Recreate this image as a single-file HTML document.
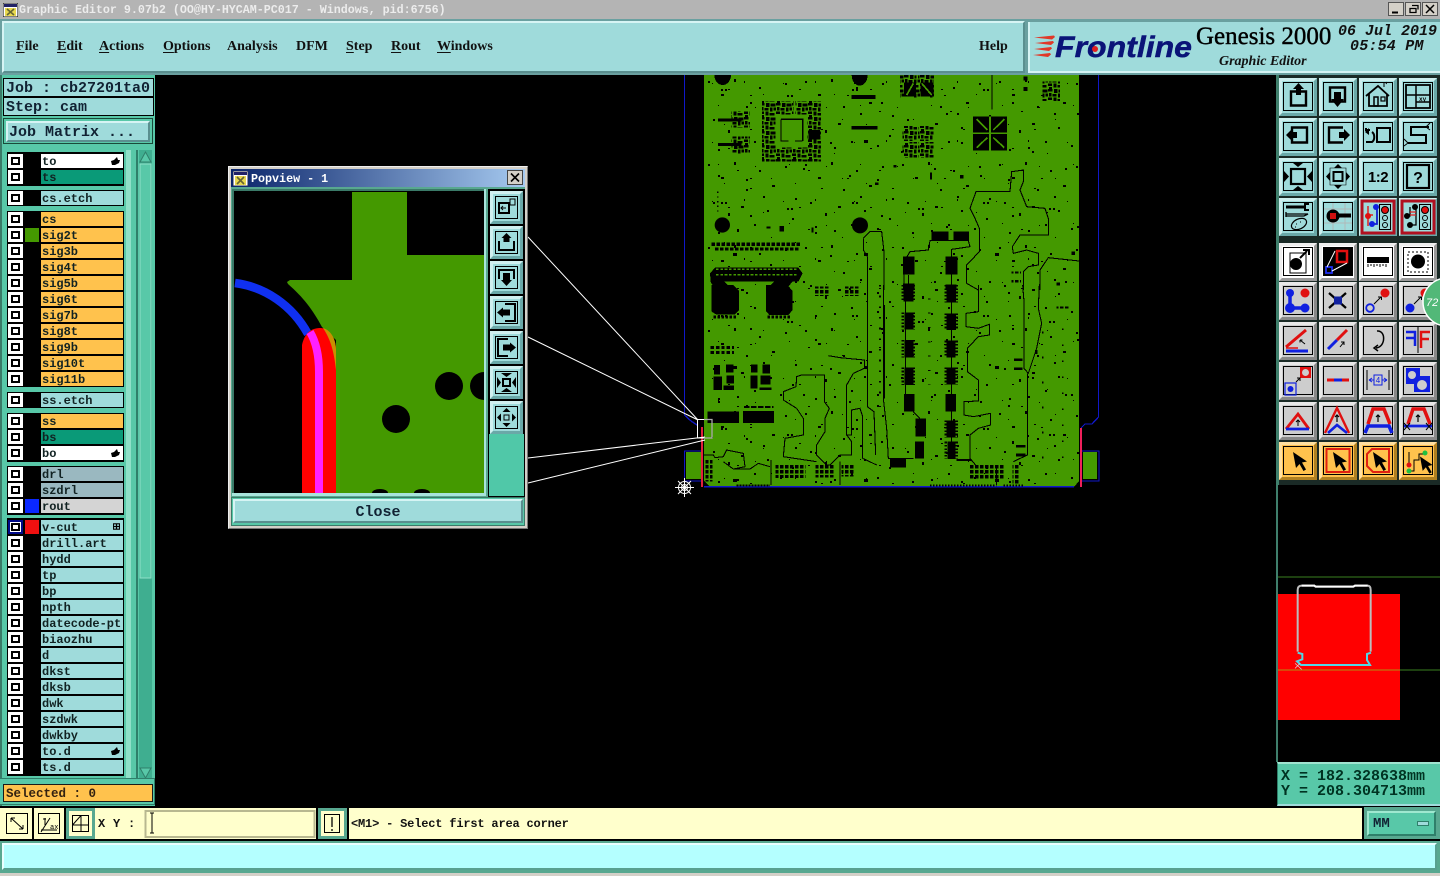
<!DOCTYPE html>
<html><head><meta charset="utf-8"><title>Graphic Editor</title>
<style>
html,body{margin:0;padding:0;background:#000;width:1440px;height:876px;overflow:hidden}
body{position:relative;font-family:"Liberation Mono",monospace;color:#111}
.a{position:absolute;box-sizing:border-box;white-space:pre}
.m{position:absolute;top:39px;font:bold 14px/16px "Liberation Serif",serif;color:#111}
.m u{text-underline-offset:2px}
.g{position:absolute;left:7px;width:117px;background:#000}
.r{position:absolute;left:8px;height:14px;width:115px}
.c{position:absolute;left:0;top:0;width:15px;height:14px;background:#fff}
.c:after{content:"";position:absolute;left:3px;top:3px;width:5px;height:4px;border:2px solid #000;background:#fff}
.s{position:absolute;left:17px;top:0;width:14px;height:14px}
.n{position:absolute;left:33px;top:0;width:81px;height:14px;background:#9fdbdb;font:bold 12px/16px "Liberation Mono",monospace;padding-left:1px;overflow:hidden;color:#122;letter-spacing:0}
.o{background:#ffc24d}.w{background:#fff}.t{background:#0a9a78}.gy{background:#9ab8c0}.l{background:#d4d4d4}
.h{position:absolute;right:3px;top:3px;width:9px;height:8px}
</style></head><body>

<!-- title bar -->
<div class="a" style="left:0;top:0;width:1440px;height:19px;background:#b4b4b4"></div>
<svg class="a" style="left:3px;top:3px" width="15" height="14"><rect width="15" height="14" fill="#fff" stroke="#000"/><rect x="1" y="1" width="13" height="3" fill="#226"/><rect x="2" y="5" width="11" height="8" fill="#e8d850"/><path d="M4 6l7 6M11 6l-7 6" stroke="#663" stroke-width="1.6"/></svg>
<div class="a" style="left:19px;top:3px;font:bold 11.7px/14px 'Liberation Mono',monospace;color:#ececec;letter-spacing:-.02px">Graphic Editor 9.07b2 (OO@HY-HYCAM-PC017 - Windows, pid:6756)</div>
<svg class="a" style="left:1388px;top:2px" width="50" height="14">
<g fill="#d4d0c8" stroke="#555"><rect x=".5" y=".5" width="15" height="13"/><rect x="17.5" y=".5" width="15" height="13"/><rect x="34.5" y=".5" width="15" height="13"/></g>
<path d="M4 10.5h6" stroke="#000" stroke-width="2"/><path d="M22 6.5h6v4h-6zM24 3.500h6v4" fill="none" stroke="#000" stroke-width="1.300"/><path d="M38 3l8 8M46 3l-8 8" stroke="#000" stroke-width="1.500"/></svg>

<!-- menu -->
<div class="a" style="left:0;top:19px;width:1440px;height:56px;background:#6aa0a0"></div>
<div class="a" style="left:2px;top:21px;width:1023px;height:52px;background:#9fdbdb;border-left:2px solid #d6f4f4;border-top:2px solid #d6f4f4;border-bottom:2px solid #5a8f8f;border-right:2px solid #5a8f8f"></div>
<div class="a" style="left:1028px;top:22px;width:412px;height:51px;background:#9fdbdb;border-left:2px solid #d6f4f4;border-bottom:2px solid #d6f4f4"></div>
<div class="m" style="left:16px"><u>F</u>ile</div>
<div class="m" style="left:57px"><u>E</u>dit</div>
<div class="m" style="left:99px"><u>A</u>ctions</div>
<div class="m" style="left:163px"><u>O</u>ptions</div>
<div class="m" style="left:227px">Analysis</div>
<div class="m" style="left:296px">DFM</div>
<div class="m" style="left:346px"><u>S</u>tep</div>
<div class="m" style="left:391px"><u>R</u>out</div>
<div class="m" style="left:437px"><u>W</u>indows</div>
<div class="m" style="left:979px">Help</div>

<!-- logo -->
<svg class="a" style="left:1030px;top:30px" width="170" height="32">
<path d="M4 7.500L24 5.500 25 7 22 9.500ZM5 13L23 11 24 12.500 21 15ZM4 19L21 17 22 18.500 19 21ZM3 25L20 23 21 24.500 18 27Z" fill="#e03828"/>
<text x="25" y="27" font-family="Liberation Sans" font-weight="bold" font-style="italic" font-size="30" fill="#0a1478" stroke="#0a1478" stroke-width=".5" textLength="137" lengthAdjust="spacingAndGlyphs">Frontline</text>
<circle cx="65" cy="19" r="3" fill="#e02020"/></svg>
<div class="a" style="left:1196px;top:22px;font:25px/30px 'Liberation Serif',serif;color:#000;-webkit-text-stroke:.4px #000">Genesis 2000</div>
<div class="a" style="left:1219px;top:54px;font:italic bold 14px/16px 'Liberation Serif',serif;color:#111">Graphic Editor</div>
<div class="a" style="left:1338px;top:24px;font:italic bold 15px/16px 'Liberation Mono',monospace;color:#111">06 Jul 2019</div>
<div class="a" style="left:1350px;top:39px;font:italic bold 15px/16px 'Liberation Mono',monospace;color:#111;letter-spacing:.2px">05:54 PM</div>

<!-- left panel -->
<div class="a" style="left:0;top:75px;width:155px;height:733px;background:#58c8a8;border-left:2px solid #3a7a68"></div>
<div class="a" style="left:3px;top:78px;width:151px;height:19px;background:#9fdbdb;border:1px solid #000;font:bold 15px/19px 'Liberation Mono',monospace;padding-left:2px;color:#123">Job : cb27201ta0</div>
<div class="a" style="left:3px;top:97px;width:151px;height:19px;background:#9fdbdb;border:1px solid #000;font:bold 15px/19px 'Liberation Mono',monospace;padding-left:2px;color:#123">Step: cam</div>
<div class="a" style="left:3px;top:118px;width:150px;height:26px;background:#58c8a8;border:1px solid #1a4a3a"></div>
<div class="a" style="left:6px;top:121px;width:144px;height:21px;background:#9fdbdb;border-top:2px solid #d6f4f4;border-left:2px solid #d6f4f4;border-right:2px solid #5a8f8f;border-bottom:2px solid #5a8f8f;font:bold 15px/19px 'Liberation Mono',monospace;padding-left:1px;color:#123">Job Matrix ...</div>

<div class="g" style="top:152px;height:34px"></div>
<div class="g" style="top:190px;height:16px"></div>
<div class="g" style="top:211px;height:176px"></div>
<div class="g" style="top:392px;height:16px"></div>
<div class="g" style="top:413px;height:49px"></div>
<div class="g" style="top:466px;height:49px"></div>
<div class="g" style="top:518px;height:258px"></div>

<div class="r" style="top:154px"><i class="c"></i><b class="n w">to<svg class="h" viewBox="0 0 9 8"><path d="M0 4l3-1 3-3 1 3 2 0-1 3-4 2H1z"/></svg></b></div>
<div class="r" style="top:170px"><i class="c"></i><b class="n t">ts</b></div>
<div class="r" style="top:191px"><i class="c"></i><b class="n">cs.etch</b></div>
<div class="r" style="top:212px"><i class="c"></i><b class="n o">cs</b></div>
<div class="r" style="top:228px"><i class="c"></i><i class="s" style="background:#449900"></i><b class="n o">sig2t</b></div>
<div class="r" style="top:244px"><i class="c"></i><b class="n o">sig3b</b></div>
<div class="r" style="top:260px"><i class="c"></i><b class="n o">sig4t</b></div>
<div class="r" style="top:276px"><i class="c"></i><b class="n o">sig5b</b></div>
<div class="r" style="top:292px"><i class="c"></i><b class="n o">sig6t</b></div>
<div class="r" style="top:308px"><i class="c"></i><b class="n o">sig7b</b></div>
<div class="r" style="top:324px"><i class="c"></i><b class="n o">sig8t</b></div>
<div class="r" style="top:340px"><i class="c"></i><b class="n o">sig9b</b></div>
<div class="r" style="top:356px"><i class="c"></i><b class="n o">sig10t</b></div>
<div class="r" style="top:372px"><i class="c"></i><b class="n o">sig11b</b></div>
<div class="r" style="top:393px"><i class="c"></i><b class="n">ss.etch</b></div>
<div class="r" style="top:414px"><i class="c"></i><b class="n o">ss</b></div>
<div class="r" style="top:430px"><i class="c"></i><b class="n t">bs</b></div>
<div class="r" style="top:446px"><i class="c"></i><b class="n w">bo<svg class="h" viewBox="0 0 9 8"><path d="M0 4l3-1 3-3 1 3 2 0-1 3-4 2H1z"/></svg></b></div>
<div class="r" style="top:467px"><i class="c"></i><b class="n gy">drl</b></div>
<div class="r" style="top:483px"><i class="c"></i><b class="n gy">szdrl</b></div>
<div class="r" style="top:499px"><i class="c"></i><i class="s" style="background:#0a28ff"></i><b class="n l">rout</b></div>
<div class="r" style="top:520px"><i class="c" style="outline:2px solid #000a8a;outline-offset:-2px"></i><i class="s" style="background:#f01010"></i><b class="n">v-cut<svg class="h" style="width:7px;height:7px" viewBox="0 0 9 8"><path d="M.5.5h8v7h-8zM4.500.5v7M.5 4h8" fill="none" stroke="#000" stroke-width="1.500"/></svg></b></div>
<div class="r" style="top:536px"><i class="c"></i><b class="n">drill.art</b></div>
<div class="r" style="top:552px"><i class="c"></i><b class="n">hydd</b></div>
<div class="r" style="top:568px"><i class="c"></i><b class="n">tp</b></div>
<div class="r" style="top:584px"><i class="c"></i><b class="n">bp</b></div>
<div class="r" style="top:600px"><i class="c"></i><b class="n">npth</b></div>
<div class="r" style="top:616px"><i class="c"></i><b class="n">datecode-pt</b></div>
<div class="r" style="top:632px"><i class="c"></i><b class="n">biaozhu</b></div>
<div class="r" style="top:648px"><i class="c"></i><b class="n">d</b></div>
<div class="r" style="top:664px"><i class="c"></i><b class="n">dkst</b></div>
<div class="r" style="top:680px"><i class="c"></i><b class="n">dksb</b></div>
<div class="r" style="top:696px"><i class="c"></i><b class="n">dwk</b></div>
<div class="r" style="top:712px"><i class="c"></i><b class="n">szdwk</b></div>
<div class="r" style="top:728px"><i class="c"></i><b class="n">dwkby</b></div>
<div class="r" style="top:744px"><i class="c"></i><b class="n">to.d<svg class="h" viewBox="0 0 9 8"><path d="M0 4l3-1 3-3 1 3 2 0-1 3-4 2H1z"/></svg></b></div>
<div class="r" style="top:760px"><i class="c"></i><b class="n">ts.d</b></div>

<!-- scrollbars -->
<svg class="a" style="left:124px;top:150px" width="31" height="632">
<rect x="2" width="5" height="632" fill="#8fe0c8"/><rect x="7" width="5" height="632" fill="#58c8a8"/><rect x="12" width="2" height="632" fill="#2f7f6a"/>
<rect x="15" width="13" height="630" fill="#3fae90"/>
<rect x="16" y="14" width="11" height="414" fill="#58c8a8" stroke="#8fe0c8"/>
<path d="M16 12L21.500 2 27 12z" fill="#58c8a8" stroke="#2f7f6a"/>
<path d="M16 618L21.500 628 27 618z" fill="#58c8a8" stroke="#2f7f6a"/>
</svg>
<div class="a" style="left:0;top:778px;width:155px;height:27px;background:#58c8a8;border:1px solid #2f7f6a;border-width:1px 1px 1px 0"></div>
<div class="a" style="left:3px;top:784px;width:150px;height:18px;background:#ffc24d;border:1px solid #1a1a1a;font:bold 12.500px/18px 'Liberation Mono',monospace;padding-left:2px;color:#321">Selected : 0</div>

<!-- PCB canvas -->
<svg class="a" style="left:155px;top:75px" width="1121" height="733" viewBox="155 75 1121 733" shape-rendering="crispEdges">
<defs>
<pattern id="sp" width="97" height="83" patternUnits="userSpaceOnUse" x="704" y="75"><path d="M4 6h2v2H4zM17 19h3v2h-3zM30 4h2v3h-2zM42 31h2v2h-2zM55 12h2v2h-2zM68 27h3v2h-3zM81 8h2v2h-2zM91 40h2v2h-2zM9 44h2v2H9zM24 55h2v3h-2zM37 48h3v2h-3zM50 66h2v2h-2zM63 52h2v2h-2zM76 70h2v2h-2zM88 60h2v2h-2zM14 74h2v2h-2zM33 72h2v2h-2zM59 38h2v2h-2zM46 20h2v1h-2z"/></pattern>
<pattern id="sp2" width="131" height="113" patternUnits="userSpaceOnUse" x="710" y="80"><path d="M11 9h2v2h-2zM15 9h2v2h-2zM40 22h2v2h-2zM77 15h2v2h-2zM81 15h2v2h-2zM105 33h2v2h-2zM23 60h4v3h-4zM60 71h2v2h-2zM93 88h2v2h-2zM120 62h2v2h-2zM36 99h2v2h-2zM8 95h2v2H8z"/></pattern>
<pattern id="sp3" width="71" height="59" patternUnits="userSpaceOnUse" x="706" y="78"><path d="M6 5h1v1H6zM22 11h2v1h-2zM38 3h1v2h-1zM57 16h1v1h-1zM12 27h1v1h-1zM31 33h2v1h-2zM49 29h1v1h-1zM65 41h1v1h-1zM18 46h1v1h-1zM44 51h2v1h-2z"/></pattern>
<pattern id="dn" width="48" height="42" patternUnits="userSpaceOnUse"><rect width="48" height="42" fill="#449900"/><path d="M0 0h14v8H0zM18 0h10v12H18zM32 2h14v8H32zM3 12h8v10H3zM14 15h12v7H14zM30 14h8v12H30zM41 13h7v9h-7zM0 26h12v7H0zM16 26h9v12H16zM29 30h15v8H29zM3 36h9v6H3z"/></pattern>
<pattern id="gd" width="15" height="15" patternUnits="userSpaceOnUse"><rect width="10" height="10"/></pattern>
</defs>

<!-- blue outline -->
<path d="M684.500 75V415L691 421 697 425M1098.500 75V417L1092 424H1085L1081 428" fill="none" stroke="#1018c8" stroke-width="1.300"/>
<rect x="684.500" y="451" width="18" height="30" fill="none" stroke="#1018c8" stroke-width="1.300"/>
<rect x="1081" y="451" width="18" height="30" fill="none" stroke="#1018c8" stroke-width="1.300"/>
<rect x="686" y="452" width="15" height="27" fill="#449900"/>
<rect x="1083" y="452" width="14" height="27" fill="#449900"/>

<!-- board -->
<path d="M704 75H1079V481L1074 487H710L704 481Z" fill="#449900"/>
<rect x="704" y="75" width="375" height="412" fill="url(#sp)"/>
<rect x="704" y="75" width="375" height="412" fill="url(#sp2)"/>
<rect x="704" y="75" width="375" height="412" fill="url(#sp3)"/>
<path d="M704 486.500H710L1074 486.500" stroke="#1018c8" stroke-width="1.500" fill="none"/>

<!-- top zoomed group -->
<g transform="translate(680,75) scale(.33333)">
<path d="M103 0h50a25 30 0 0 1-50 0zM515 0h48a24 32 0 0 1-48 0z"/>
<rect x="660" y="0" width="102" height="68" fill="url(#dn)"/>
<rect x="672" y="22" width="36" height="42"/><rect x="722" y="22" width="38" height="42"/>
<path d="M680 60L700 25M725 25L755 60M712 0V14" stroke="#449900" stroke-width="5"/>
<rect x="934" y="0" width="4" height="103"/>
<rect x="1087" y="20" width="53" height="58" fill="url(#dn)"/>
<rect x="1030" y="5" width="12" height="12"/><rect x="1030" y="36" width="12" height="12"/>
<!-- QFP -->
<rect x="246" y="78" width="177" height="181" fill="url(#dn)"/>
<rect x="286" y="118" width="96" height="100" fill="#449900"/>
<path d="M303 133H368V198M303 133V198H325M345 198H368" fill="none" stroke="#000" stroke-width="4"/>
<rect x="386" y="165" width="34" height="28"/>
<rect x="340" y="78" width="6" height="40" fill="#449900"/>
<!-- left rows -->
<rect x="155" y="108" width="55" height="50" fill="url(#dn)"/><rect x="114" y="130" width="70" height="9"/>
<rect x="155" y="185" width="55" height="50" fill="url(#dn)"/><rect x="114" y="204" width="70" height="9"/>
<rect x="515" y="153" width="78" height="10"/><rect x="515" y="60" width="72" height="12"/>
<rect x="667" y="153" width="93" height="95" fill="url(#dn)"/><path d="M712 153v95M667 200h93" stroke="#449900" stroke-width="3"/>
<!-- X blocks -->
<rect x="879" y="124" width="102" height="102"/>
<path d="M930 124V226M879 175H981M890 132L922 165M973 132L940 165M890 218L922 188M973 218L940 188" stroke="#449900" stroke-width="5"/>
<circle cx="127" cy="450" r="23" shape-rendering="auto"/><circle cx="540" cy="451" r="24" shape-rendering="auto"/>
<!-- connector -->
<path d="M95 508H360M105 522H355" stroke="#000" stroke-width="10" stroke-dasharray="10 5"/>
<path d="M90 595L105 578H355L368 595L355 620H338L315 645H258L282 620H133L160 645H105L92 620Z"/>
<path d="M108 583H352M108 599H355" stroke="#449900" stroke-width="5" stroke-dasharray="8 5"/>
<rect x="755" y="470" width="50" height="27"/><rect x="820" y="470" width="47" height="27"/>
<rect x="669" y="545" width="35" height="54"/>
<rect x="797" y="545" width="35" height="54"/>
<rect x="669" y="625" width="35" height="20"/><rect x="797" y="628" width="32" height="17"/>
<g fill="none" stroke="#000" stroke-width="3.200">
<path d="M550 490L570 470H605L612 530V645M550 490V525L562 545V645"/>
<path d="M672 645V560L690 530L745 525L750 497H865L870 515L815 523V645"/>
<path d="M895 645L860 625V570L898 530V460L885 430L870 400L888 350H990L995 290L1030 285V320L1020 345L1040 395L1095 400L1105 430V480H1020L997 515L1000 535L1040 525L1075 535V570L1045 575L1030 590V645"/>
<path d="M1080 645V585L1105 548L1197 558"/>
<path d="M685 600V625M815 600V628"/>
</g>
<g><rect x="260" y="455" width="12" height="5"/><rect x="298" y="453" width="14" height="16"/><rect x="395" y="458" width="6" height="14"/><rect x="585" y="322" width="10" height="8"/><rect x="640" y="270" width="10" height="8"/><rect x="995" y="590" width="28" height="8" fill="url(#gd)"/><rect x="995" y="615" width="28" height="8" fill="url(#gd)"/><rect x="750" y="293" width="6" height="20"/><rect x="835" y="298" width="20" height="16" fill="url(#gd)"/><rect x="1130" y="622" width="10" height="10"/><rect x="1175" y="530" width="10" height="10"/><rect x="400" y="637" width="40" height="8" fill="url(#gd)"/><rect x="498" y="637" width="40" height="8" fill="url(#gd)"/></g>
<path d="M113 350V415" stroke="#000" stroke-width="4" stroke-dasharray="4 10"/>
</g>

<!-- bottom zoomed group -->
<g transform="translate(670,285) scale(.33333)">
<path d="M125 0H190L207 18V75L195 88H138L125 80Z"/>
<path d="M288 0H352L368 18V75L355 90H298L288 78Z"/>
<path d="M130 96H200M292 96H362" stroke="#000" stroke-width="10" stroke-dasharray="8 4"/>
<path d="M122 188H192M122 202H192" stroke="#000" stroke-width="9" stroke-dasharray="10 6"/>
<g><path d="M700 0H730V50H700ZM703 82H730V134H703ZM703 165H730V218H703ZM703 247H730V300H703ZM702 327H733V380H702Z"/>
<path d="M830 0H858V52H830ZM830 85H858V135H830ZM830 167H857V218H830ZM830 247H857V298H830ZM827 327H858V380H827ZM830 406H857V458H830ZM832 470H857V522H832Z"/>
<path d="M737 400H768V455H737ZM735 470H762V520H735ZM660 520H708V548H660Z"/>
<rect x="113" y="380" width="94" height="34"/><rect x="219" y="378" width="93" height="36"/>
<path d="M132 240H150V268H132ZM168 238H190V262H168ZM130 275H156V315H130ZM170 272H192V296H170ZM160 302H192V315H160Z"/>
<path d="M243 238H262V262H243ZM278 238H300V265H278ZM242 272H262V310H242ZM272 272H302V298H272ZM268 308H305V315H268Z"/>
</g>
<!-- pad teeth -->
<path d="M698 0V50M698 82V134M698 165V218M698 247V300M732 0V50M732 82V134M732 165V218M732 247V300M827 0V52M827 85V135M827 167V218M827 247V298M827 406V458M827 470V522M860 0V52M860 85V135M860 167V218M860 247V298M860 406V458M860 470V522" stroke="#000" stroke-width="7" stroke-dasharray="5 5" fill="none"/>
<path d="M222 366H310" stroke="#000" stroke-width="5" stroke-dasharray="16 5"/>
<rect x="430" y="5" width="45" height="28" fill="url(#gd)"/><rect x="525" y="5" width="45" height="28" fill="url(#gd)"/>
<rect x="316" y="537" width="90" height="42" fill="url(#gd)"/><rect x="436" y="537" width="55" height="40" fill="url(#gd)"/><rect x="515" y="537" width="36" height="38" fill="url(#gd)"/><rect x="895" y="537" width="105" height="45" fill="url(#gd)"/><rect x="1028" y="537" width="20" height="60" fill="url(#gd)"/>
<rect x="107" y="525" width="20" height="65" fill="url(#gd)"/>
<path d="M200 602H300M780 602H980M1000 602H1060" stroke="#000" stroke-width="6" stroke-dasharray="5 4"/>
<g><rect x="1032" y="220" width="26" height="8"/><rect x="1032" y="247" width="26" height="8"/><rect x="1038" y="480" width="28" height="8"/><rect x="1038" y="506" width="28" height="8"/><rect x="1095" y="195" width="8" height="12"/><rect x="1160" y="64" width="36" height="9" fill="url(#gd)"/></g>
<g fill="none" stroke="#000" stroke-width="3.200">
<path d="M340 320L378 305 380 275 395 270H463V350L478 370 465 400V440L440 480V510L470 540H480L510 510H545V470L530 450V300L550 265 583 250V225L510 218 475 212"/>
<path d="M340 320V345L380 370 400 400V450L345 460 340 515 440 530"/>
<path d="M592 0V365L612 380 617 510"/>
<path d="M640 0V340L650 430 655 520H730"/>
<path d="M530 450H545V375L570 370 578 395V520L620 540"/>
<path d="M925 0V80L888 85V125L925 130 958 118V150L925 155 892 190V260L925 285V348L882 350V390L910 395 962 385V420L925 430 900 450V520L925 550"/>
<path d="M1058 0L1062 50V250L1075 265 1100 190 1115 115 1105 70 1108 0"/>
<path d="M1072 265V510L1030 530"/>
<path d="M100 510H130L135 518 160 515 170 495 220 505 225 545 190 552 160 530M190 552H240L265 535 300 545"/>
<path d="M303 525V600M510 530V600M980 540V600"/>
<path d="M707 50V82M707 134V165M707 218V247M707 300V327M730 380L750 400M845 52V85M845 135V167M845 218V247M845 298V327M845 380V406M845 458V470"/>
</g>
<path d="M860 525H905" stroke="#000" stroke-width="6"/>
<rect x="642" y="60" width="3" height="280"/>
<path d="M630 0V350" stroke="#000" stroke-width="5" stroke-dasharray="5 27"/>
<path d="M778 40V300" stroke="#000" stroke-width="7" stroke-dasharray="3 40"/>
<path d="M1178 130V520" stroke="#000" stroke-width="5" stroke-dasharray="5 43"/>
<path d="M1118 140V530" stroke="#000" stroke-width="5" stroke-dasharray="5 70"/>
</g>

<!-- red guides -->
<path d="M702 427V487" stroke="#e0203c" stroke-width="2"/>
<path d="M1081 428V487" stroke="#f0205a" stroke-width="2"/>

<!-- cursor + zoom lines -->
<g stroke="#fff" fill="none" shape-rendering="auto">
<path d="M528 237L698 420M528 337L698 420M528 458L705 437M528 483L705 440" stroke-width="1"/>
<path d="M697.500 419.500H704" /><path d="M697.500 419.500V438H704"/>
<path d="M704 419.500H712V438H704" stroke="#aaa" stroke-width="1.300"/>
<circle cx="684.500" cy="487.500" r="6"/><circle cx="684.500" cy="487.500" r="3"/>
<path d="M675 487.500H694M684.500 478V497M678 481L691 494M691 481L678 494"/>
</g>
</svg>

<!-- Popview window -->
<div class="a" style="left:228px;top:166px;width:300px;height:363px;background:#d4d0c8;border:1px solid #777;border-top-color:#eee;border-left-color:#eee"></div>
<div class="a" style="left:231px;top:169px;width:294px;height:18px;background:linear-gradient(90deg,#0a246a,#a6caf0)"></div>
<svg class="a" style="left:233px;top:171px" width="15" height="15"><rect width="15" height="15" fill="#fff" stroke="#334"/><rect x="1" y="1" width="13" height="3" fill="#226"/><rect x="2" y="5" width="11" height="9" fill="#e8d850"/><path d="M4 6l7 7M11 6l-7 7" stroke="#663" stroke-width="1.600"/></svg>
<div class="a" style="left:251px;top:172px;font:bold 11.700px/14px 'Liberation Mono',monospace;color:#fff">Popview - 1</div>
<svg class="a" style="left:507px;top:170px" width="16" height="15"><rect x=".5" y=".5" width="15" height="14" fill="#d4d0c8" stroke="#444"/><path d="M4 3.500l8 8M12 3.500l-8 8" stroke="#000" stroke-width="1.600"/></svg>
<div class="a" style="left:231px;top:187px;width:294px;height:339px;background:#58a890"></div>
<svg class="a" style="left:232px;top:189px" width="254" height="307" viewBox="232 189 254 307">
<rect x="232" y="189" width="254" height="307" fill="#3a7a68"/>
<rect x="234" y="191" width="250" height="302" fill="#000"/>
<path d="M352 192H407V255H484V493H336V340L322 327C313 310 303 297 288 284L287 282L290 280H352Z" fill="#449900"/>
<circle cx="449" cy="386" r="14"/><path d="M484 372a14 14 0 0 0 0 28z"/>
<circle cx="396" cy="419" r="14"/>
<path d="M372 493a8 4 0 0 1 16 0zM414 493a8 4 0 0 1 16 0z"/>
<path d="M235 283C265 287 292 305 308 334" fill="none" stroke="#1030f0" stroke-width="8.500"/>
<path d="M302 493V345C304 335 310 328 320 328C330 328 336 340 336 350V493Z" fill="#ff0000"/>
<path d="M323 328C330 330 336 338 336 350V370C334 352 331 340 323 328Z" fill="#c89000"/>
<path d="M310 332C316 342 319 355 319 372V493" fill="none" stroke="#ff20ff" stroke-width="8"/>
<rect x="232" y="493" width="254" height="3" fill="#a8e4dc"/>
<rect x="484" y="189" width="2" height="307" fill="#a8e4dc"/>
</svg>
<div class="a" style="left:488px;top:189px;width:37px;height:308px;background:#000"></div>
<div class="a" style="left:489px;top:434px;width:35px;height:62px;background:#50c8a8"></div>
<svg class="a" style="left:490px;top:191px" width="34" height="244" viewBox="0 0 34 244">
<defs><g id="pb"><rect width="33" height="33" fill="#6aa8a8"/><path d="M0 0H33L30 3H3V30L0 33Z" fill="#d0f0f0"/><rect x="3" y="3" width="27" height="27" fill="#9fdbdb"/><rect x="5.500" y="5.500" width="22" height="22" fill="none" stroke="#000"/></g></defs>
<g><use href="#pb"/><path d="M9 12h10v10H9z" fill="none" stroke="#000" stroke-width="2"/><path d="M20 8h5v6h-5z" fill="none" stroke="#000"/><path d="M11 17h5M13 15l-2 2 2 2" stroke="#000" fill="none"/></g>
<g transform="translate(0,35)"><use href="#pb"/><path d="M16.500 7l5 5h-2v4h-6v-4h-2z"/><path d="M9 15v9h15v-9" fill="none" stroke="#000" stroke-width="2"/></g>
<g transform="translate(0,70)"><use href="#pb"/><path d="M9 18V9h15v9" fill="none" stroke="#000" stroke-width="2"/><path d="M13 12h7v7h2l-5.500 6-5.500-6h2z"/></g>
<g transform="translate(0,105)"><use href="#pb"/><path d="M15 8h10v17H15" fill="none" stroke="#000" stroke-width="2"/><path d="M7 16.500l6-5v2h7v6h-7v2z"/></g>
<g transform="translate(0,140)"><use href="#pb"/><path d="M18 8H8v17h10" fill="none" stroke="#000" stroke-width="2"/><path d="M26 16.500l-6-5v2h-7v6h7v2z"/></g>
<g transform="translate(0,175)"><use href="#pb"/><path d="M13 13h7v7h-7z" fill="none" stroke="#000" stroke-width="2"/><path d="M11 7h11l-5.500 4zM11 26h11l-5.500-4zM7 11v11l4-5.500zM26 11v11l-4-5.500z"/></g>
<g transform="translate(0,210)"><use href="#pb"/><path d="M14 14h5v5h-5z" fill="none" stroke="#000"/><path d="M16.500 7l4 4h-8zM16.500 26l4-4h-8zM7 16.500l4-4v8zM26 16.500l-4-4v8z"/></g>
</svg>
<div class="a" style="left:231px;top:497px;width:294px;height:29px;background:#58c8a8;border:1px solid #3a7a68"></div>
<div class="a" style="left:233px;top:499px;width:290px;height:24px;background:#9fdbdb;border-top:2px solid #d6f4f4;border-left:2px solid #d6f4f4;border-right:2px solid #5a8f8f;border-bottom:2px solid #5a8f8f;font:bold 15px/23px 'Liberation Mono',monospace;text-align:center;color:#123">Close</div>

<!-- right panel -->
<div class="a" style="left:1276px;top:75px;width:164px;height:410px;background:#1a2a26;border-left:3px solid #3f7f6c"></div>
<div class="a" style="left:1276px;top:485px;width:2px;height:277px;background:#3f7f6c"></div>
<svg class="a" style="left:1275px;top:75px" width="165" height="410" viewBox="1275 75 165 410">
<defs>
<g id="bt"><rect width="38" height="38" fill="#6aa8a8"/><path d="M0 0H38L35 3H3V35L0 38Z" fill="#cdeeee"/><rect x="3" y="3" width="32" height="32" fill="#9fdbdb"/><rect x="4.500" y="4.500" width="29" height="28" fill="none" stroke="#000"/></g>
<g id="bw"><rect width="38" height="38" fill="#999"/><path d="M0 0H38L35 3H3V35L0 38Z" fill="#eee"/><rect x="3" y="3" width="32" height="32" fill="#fff"/><rect x="4.500" y="4.500" width="29" height="28" fill="#fff" stroke="#000"/></g>
<g id="bg"><rect width="38" height="38" fill="#888"/><path d="M0 0H38L35 3H3V35L0 38Z" fill="#e8e8e8"/><rect x="3" y="3" width="32" height="32" fill="#cdcdcd"/><rect x="4.500" y="4.500" width="29" height="28" fill="none" stroke="#000"/></g>
<g id="bo"><rect width="38" height="38" fill="#b08020"/><path d="M0 0H38L35 3H3V35L0 38Z" fill="#ffe0a0"/><rect x="3" y="3" width="32" height="32" fill="#ffc24d"/><rect x="4.500" y="4.500" width="29" height="28" fill="none" stroke="#000"/></g>
<path id="ar" d="M0 0L3 16 6.500 12 10.500 19 13 17.500 9 10.500 14 9.500Z"/>
</defs>

<!-- row 1 -->
<g transform="translate(1279,78)"><use href="#bt"/><path d="M12 13.500V27.500H27V13.500Z" fill="none" stroke="#000" stroke-width="2.400"/><path d="M19.500 5L25 11H22V17H17V11H14Z"/></g>
<g transform="translate(1319,78)"><use href="#bt"/><path d="M11 9.500H26V23.500H11Z" fill="none" stroke="#000" stroke-width="2.400"/><path d="M15 14H22V21H25L18.500 29 12 21H15Z"/></g>
<g transform="translate(1359,78)"><use href="#bt"/><path d="M7 18L19 8 30 18M10 16V28H28V16" fill="none" stroke="#000" stroke-width="1.800"/><rect x="15" y="19" width="4" height="9" fill="none" stroke="#000" stroke-width="1.500"/><rect x="22" y="19" width="4" height="4" fill="none" stroke="#000" stroke-width="1.200"/><path d="M25 9V5M27 6l1-2" stroke="#000"/></g>
<g transform="translate(1399,78)"><use href="#bt"/><rect x="7" y="7" width="24" height="23" fill="none" stroke="#000" stroke-width="1.800"/><path d="M17 7V30M7 17H31M17 24H31" stroke="#000" stroke-width="1.500"/><text x="20" y="23" font-family="Liberation Mono" font-size="6" font-weight="bold">xy</text></g>
<!-- row 2 -->
<g transform="translate(1279,118)"><use href="#bt"/><path d="M13 9.500H28V24.500H13Z" fill="none" stroke="#000" stroke-width="2.400"/><path d="M7 17L13 11V14H18V20H13V23Z"/></g>
<g transform="translate(1319,118)"><use href="#bt"/><path d="M24 9.500H10V24.500H24" fill="none" stroke="#000" stroke-width="2.400"/><path d="M31 17L25 11V14H20V20H25V23Z"/></g>
<g transform="translate(1359,118)"><use href="#bt"/><rect x="18" y="10" width="13" height="14" fill="none" stroke="#000" stroke-width="2"/><path d="M11 12H7V10M7 24H13C16 22 16 16 13 14" fill="none" stroke="#000" stroke-width="2"/><path d="M6 14l4-4v7z"/></g>
<g transform="translate(1399,118)"><use href="#bt"/><path d="M30 9H12V17H27V25H9" fill="none" stroke="#000" stroke-width="2"/><path d="M31 5L27 9 31 12M5 21L9 25 5 28" fill="none" stroke="#000"/></g>
<!-- row 3 -->
<g transform="translate(1279,158)"><use href="#bt"/><rect x="12" y="11" width="14" height="15" fill="none" stroke="#000" stroke-width="2.200"/><path d="M14 5H24L19 9zM14 32H24L19 28zM5 13L10 18.500 5 24zM33 13L28 18.500 33 24z"/></g>
<g transform="translate(1319,158)"><use href="#bt"/><rect x="14.500" y="14" width="9" height="9" fill="none" stroke="#000" stroke-width="2"/><path d="M19 6L23 10H15zM19 31L23 27H15zM7 18.500L11 14V23zM31 18.500L27 14V23z"/><path d="M11 10H27V27H11Z" fill="none" stroke="#000" stroke-width=".6"/></g>
<g transform="translate(1359,158)"><use href="#bt"/><text x="19" y="24" text-anchor="middle" font-family="Liberation Sans" font-weight="bold" font-size="15" letter-spacing="-.5">1:2</text></g>
<g transform="translate(1399,158)"><use href="#bt"/><rect x="8" y="7" width="22" height="23" fill="none" stroke="#000" stroke-width="2.200"/><text x="19" y="25" text-anchor="middle" font-family="Liberation Sans" font-weight="bold" font-size="16">?</text></g>
<!-- row 4 -->
<g transform="translate(1279,198)"><use href="#bt"/><path d="M7 9H25" stroke="#000" stroke-width="3"/><path d="M25 5h5v2h-3v4h3v2h-5z"/><path d="M7 16H29L25 18H7ZM7 14V19" fill="none" stroke="#000" stroke-width="1.300"/><ellipse cx="20" cy="26" rx="8" ry="5" fill="none" stroke="#000" stroke-width="1.200" transform="rotate(-25 20 26)"/><path d="M17 26h1M21 24h1M16 29h1" stroke="#000"/></g>
<g transform="translate(1319,198)"><use href="#bt"/><path d="M5 11H33M5 25H33M14 5V32M26 5V32" stroke="#b0b8b8"/><circle cx="14" cy="18" r="6.500"/><rect x="11" y="15" width="6" height="6" fill="#d01010"/><rect x="18" y="15.500" width="14" height="4"/></g>
<g transform="translate(1359,198)"><use href="#bt"/><rect x="3" y="3" width="32" height="32" fill="#9fdbdb" stroke="#b01020" stroke-width="3"/><path d="M9 8V28M9 17H14" fill="none" stroke="#e02020" stroke-width="1.500"/><path d="M14 26H18V10" fill="none" stroke="#1020d0" stroke-width="1.800"/><circle cx="13" cy="26" r="3" fill="#1020e0"/><circle cx="17" cy="9" r="3" fill="#1020e0"/><circle cx="9" cy="18" r="3" fill="#e01010"/><rect x="20.500" y="6.500" width="11" height="25" fill="#9fdbdb" stroke="#000"/><circle cx="26" cy="12" r="3.500" fill="#e01010" stroke="#000"/><circle cx="26" cy="20" r="2.500" fill="none" stroke="#000"/><circle cx="26" cy="27" r="2.500" fill="none" stroke="#000"/></g>
<g transform="translate(1399,198)"><use href="#bt"/><rect x="3" y="3" width="32" height="32" fill="#9fdbdb" stroke="#b01020" stroke-width="3"/><path d="M11 9V18H8M11 27H17V10" fill="none" stroke="#000" stroke-width="1.300"/><path d="M11 14h6M11 17h6" stroke="#e02020" stroke-width="1.300"/><circle cx="11" cy="27" r="3"/><circle cx="16" cy="9" r="3"/><circle cx="8" cy="18" r="3"/><rect x="20.500" y="6.500" width="11" height="25" fill="#9fdbdb" stroke="#000"/><circle cx="26" cy="12" r="3.500" fill="#e01010" stroke="#000"/><circle cx="26" cy="20" r="2.500" fill="none" stroke="#000"/><circle cx="26" cy="27" r="2.500" fill="none" stroke="#000"/></g>
<!-- white row -->
<g transform="translate(1279,243)"><use href="#bw"/><circle cx="17" cy="21" r="6"/><rect x="11" y="10" width="16" height="20" fill="none" stroke="#000"/><path d="M21 15L28 8M24 7H30V12" stroke="#000" stroke-width="2" fill="none"/></g>
<g transform="translate(1319,243)"><use href="#bw"/><rect x="5" y="5" width="28" height="27" fill="#000"/><rect x="18" y="8" width="10" height="11" fill="none" stroke="#e01010" stroke-width="2.500"/><rect x="7" y="24" width="6" height="6" fill="none" stroke="#2030f0" stroke-width="1.800"/><path d="M16 8L8 24M28 20L13 28" stroke="#fff"/></g>
<g transform="translate(1359,243)"><use href="#bw"/><rect x="8" y="14" width="22" height="6"/><path d="M9 21V24M12 21V23M15 21V24M18 21V23M21 21V24M24 21V23M27 21V24" stroke="#000"/></g>
<g transform="translate(1399,243)"><use href="#bw"/><circle cx="19" cy="18.500" r="7"/><rect x="9" y="9" width="20" height="20" fill="none" stroke="#000" stroke-dasharray="2 2"/></g>
<!-- gray rows -->
<g transform="translate(1279,282)"><use href="#bg"/><path d="M11 12V26H25" stroke="#1020e0" stroke-width="3.500" fill="none"/><circle cx="11" cy="11" r="4" fill="#1020e0"/><circle cx="11" cy="26" r="5" fill="#1020e0"/><circle cx="26" cy="26" r="4.500" fill="#1020e0"/><circle cx="26" cy="11" r="4.500" fill="#e01010"/></g>
<g transform="translate(1319,282)"><use href="#bg"/><path d="M10 11L27 26M27 11L10 26" stroke="#000" stroke-width="2.200"/><rect x="15" y="14.500" width="8" height="8" fill="#1020a0"/></g>
<g transform="translate(1359,282)"><use href="#bg"/><circle cx="11" cy="26" r="3.800" fill="none" stroke="#1020e0" stroke-width="1.800"/><circle cx="26" cy="11" r="4.500" fill="#e01010"/><path d="M15 22L22 15M19 15H22.500V18" stroke="#000" fill="none"/></g>
<g transform="translate(1399,282)"><use href="#bg"/><circle cx="11" cy="26" r="4.500" fill="#1020e0"/><circle cx="26" cy="11" r="4.500" fill="#e01010"/><path d="M15 22L22 15M19 15H22.500V18" stroke="#000" fill="none"/></g>

<g transform="translate(1279,322)"><use href="#bg"/><path d="M7 25L27 8" stroke="#e01010" stroke-width="3"/><path d="M7 29H29" stroke="#1020e0" stroke-width="3"/><path d="M7 26H19" stroke="#e01010" stroke-width="1.500"/><path d="M21 18L26 22M21 18h2.500M21 18v2.500" stroke="#000"/></g>
<g transform="translate(1319,322)"><use href="#bg"/><path d="M9 27L18 18" stroke="#1020e0" stroke-width="3"/><path d="M18 18L28 8" stroke="#e01010" stroke-width="3"/><path d="M21 25L25 20M22 20h3v3" stroke="#000" fill="none"/></g>
<g transform="translate(1359,322)"><use href="#bg"/><path d="M18 9C27 8 27 25 17 26M19 23L15 26 19 29" fill="none" stroke="#000" stroke-width="1.500"/></g>
<g transform="translate(1399,322)"><use href="#bg"/><path d="M19 5V31" stroke="#000"/><path d="M7 10H16V24M7 16H15" fill="none" stroke="#1020e0" stroke-width="2.500"/><path d="M31 10H22V26M22 17H30" fill="none" stroke="#e01010" stroke-width="2.500"/></g>

<g transform="translate(1279,362)"><use href="#bg"/><rect x="6" y="21" width="11" height="12" fill="none" stroke="#1020e0" stroke-width="1.200"/><circle cx="11.500" cy="27" r="3" fill="#1020e0"/><rect x="21" y="5" width="11" height="11" fill="#e01010"/><circle cx="26.500" cy="10.500" r="3.500" fill="#cdcdcd"/><path d="M17 20L21 16M18 16h3v3" stroke="#000" fill="none"/></g>
<g transform="translate(1319,362)"><use href="#bg"/><path d="M8 18H30" stroke="#e01010" stroke-width="3"/><path d="M15 18H23" stroke="#1020e0" stroke-width="3"/></g>
<g transform="translate(1359,362)"><use href="#bg"/><path d="M8 8V28M30 8V28" stroke="#000"/><path d="M10 18H28M10 18l3-2M10 18l3 2M28 18l-3-2M28 18l-3 2" stroke="#1020e0" fill="none"/><rect x="15" y="13" width="8" height="10" fill="#cdcdcd" stroke="#1020e0"/><text x="19" y="21" font-size="8" text-anchor="middle" fill="#1020e0" font-family="Liberation Sans">4</text></g>
<g transform="translate(1399,362)"><use href="#bg"/><path d="M7 6H21V14H31V30H15V22H7Z" fill="#1020e0"/><circle cx="13" cy="13" r="4" fill="#cdcdcd"/><circle cx="23" cy="23" r="5" fill="#cdcdcd"/></g>

<g transform="translate(1279,402)"><use href="#bg"/><path d="M7 27L19 12 30 27" fill="none" stroke="#e01010" stroke-width="2.800"/><path d="M7 27H30" stroke="#1020e0" stroke-width="2.800"/><path d="M19 24V18M17 20l2-2 2 2" stroke="#000" fill="none"/></g>
<g transform="translate(1319,402)"><use href="#bg"/><path d="M6 31L18 6 30 31" fill="none" stroke="#e01010" stroke-width="2.400"/><path d="M9 31L18 23 28 31" fill="none" stroke="#1020e0" stroke-width="2.600"/><path d="M18 20V13M16 15l2-2 2 2" stroke="#000" stroke-width="1.200" fill="none"/></g>
<g transform="translate(1359,402)"><use href="#bg"/><path d="M9 22L14 7H25L31 22" fill="none" stroke="#e01010" stroke-width="3.500"/><path d="M6 31L9 24H30L33 31" fill="none" stroke="#1020e0" stroke-width="3.500"/><path d="M19 20V13M17 15l2-2 2 2" stroke="#000" stroke-width="1.200" fill="none"/></g>
<g transform="translate(1399,402)"><use href="#bg"/><path d="M9 22L14 7H25L31 22" fill="none" stroke="#e01010" stroke-width="3.500"/><path d="M5 24H33" stroke="#1020e0" stroke-width="2.800"/><path d="M5 21L11 28M11 21L5 28M27 21L33 28M33 21L27 28" stroke="#000"/><path d="M19 20V13M17 15l2-2 2 2" stroke="#000" stroke-width="1.200" fill="none"/></g>

<g transform="translate(1279,442)"><use href="#bo"/><use href="#ar" x="14" y="10"/></g>
<g transform="translate(1319,442)"><use href="#bo"/><rect x="7.500" y="7" width="23" height="23" fill="none" stroke="#e02010" stroke-width="2"/><use href="#ar" x="14" y="10"/></g>
<g transform="translate(1359,442)"><use href="#bo"/><path d="M13 7H30V30H14L8 24V12Z" fill="none" stroke="#e02010" stroke-width="2"/><use href="#ar" x="14" y="10"/></g>
<g transform="translate(1399,442)"><use href="#bo"/><path d="M10 10V23M10 29H15V18H20V12H26" fill="none" stroke="#000"/><circle cx="10" cy="23" r="2.500" fill="#e01010"/><circle cx="10" cy="29" r="2.500" fill="#20c040"/><circle cx="26" cy="11" r="2.500" fill="#20c040"/><use href="#ar" x="20" y="15" transform="translate(3,1) scale(.9)"/></g>

<!-- green indicator -->
<circle cx="1447" cy="302" r="24" fill="#52b878" stroke="#fff" stroke-width="1.500"/>
<text x="1426" y="306" font-family="Liberation Sans" font-style="italic" font-size="11" fill="#fff">72</text>
</svg>

<!-- minimap -->
<svg class="a" style="left:1275px;top:485px" width="165" height="277" viewBox="1275 485 165 277">
<rect x="1275" y="485" width="165" height="277" fill="#000"/>
<rect x="1276" y="485" width="2" height="277" fill="#3f7f6c"/>
<rect x="1278" y="594" width="122" height="126" fill="#ff0000"/>
<path d="M1278 577H1440M1278 670H1440" stroke="#3a8020"/>
<path d="M1278 670H1400" stroke="#b09010"/>
<g transform="translate(1275,570) scale(.33333)" fill="none">
<path d="M68 245V60Q68 47 80 47H118L122 50H235L240 47H278Q287 47 287 60V245" stroke="#bdbdbd" stroke-width="6"/>
<path d="M80 47H118L122 50H235L240 47H278" stroke="#fff" stroke-width="6"/>
<path d="M68 248L82 252V268L66 274 78 285H285L276 270V252L288 248" stroke="#50d8e8" stroke-width="6"/>
<path d="M60 295L75 280M60 280L80 298" stroke="#ddd" stroke-width="2"/>
</g>
</svg>

<div class="a" style="left:1277px;top:762px;width:163px;height:44px;background:#58c8a8;border-top:2px solid #a0e4d0;border-bottom:2px solid #9fdbdb;border-left:1px solid #2f7f6a"></div>
<div class="a" style="left:1281px;top:769px;font:bold 15px/15px 'Liberation Mono',monospace;color:#032">X = 182.328638mm
Y = 208.304713mm</div>

<!-- bottom bar -->
<div class="a" style="left:0;top:806px;width:1440px;height:34px;background:#000"></div>
<div class="a" style="left:0;top:808px;width:1362px;height:31px;background:#ffffcc"></div>
<svg class="a" style="left:0;top:808px" width="350" height="31" viewBox="0 0 350 31">
<rect x="32" y="0" width="2" height="31" fill="#000"/><rect x="64" y="0" width="2" height="31" fill="#000"/>
<rect x="66" y="0" width="29" height="31" fill="#58a890"/><rect x="69" y="3" width="23" height="25" fill="#ffffcc"/>
<rect x="6.500" y="5.500" width="21" height="20" fill="#ffffcc" stroke="#000"/><path d="M11 10L23 21M11 10h4M11 10v4M23 21h-4M23 21v-4" stroke="#000" fill="none"/>
<rect x="38.500" y="5.500" width="21" height="20" fill="#ffffcc" stroke="#000"/><path d="M41 24L50 10M41 22H57M45 10v7M43 11h3" stroke="#000" fill="none"/><text x="50" y="21" font-size="7" font-family="Liberation Mono">ax</text>
<rect x="72.500" y="7.500" width="16" height="16" fill="none" stroke="#000"/><path d="M72.500 17H88.500M81 7.500V23.500M81 7.500L72.500 17" stroke="#000" fill="none"/>
<rect x="145.500" y="3" width="169" height="26" fill="#ffffcc" stroke="#b8b890" stroke-width="2"/>
<path d="M150 5h4M150 25h4M152 5V25" stroke="#000" fill="none"/>
<rect x="316" y="0" width="2" height="31" fill="#000"/><rect x="347" y="0" width="2" height="31" fill="#000"/>
<rect x="318" y="0" width="29" height="31" fill="#58a890"/><rect x="321" y="3" width="23" height="25" fill="#ffffcc"/>
<rect x="324.500" y="6.500" width="15" height="18" fill="none" stroke="#000"/><path d="M332 9V19M332 21V23" stroke="#000" stroke-width="1.300"/>
</svg>
<div class="a" style="left:98px;top:817px;font:bold 12px/14px 'Liberation Mono',monospace;color:#111;letter-spacing:.3px">X Y :</div>
<div class="a" style="left:351px;top:817px;font:bold 12px/14px 'Liberation Mono',monospace;color:#111;letter-spacing:-.18px">&lt;M1&gt; - Select first area corner</div>
<div class="a" style="left:1362px;top:807px;width:78px;height:32px;background:#58a890;border-left:2px solid #000"></div>
<div class="a" style="left:1367px;top:811px;width:69px;height:25px;background:#58c8a8;border-top:2px solid #9fe8d0;border-left:2px solid #9fe8d0;border-right:2px solid #2f7f6a;border-bottom:2px solid #2f7f6a;font:bold 14px/23px 'Liberation Mono',monospace;padding-left:4px;color:#123">MM</div>
<div class="a" style="left:1417px;top:821px;width:12px;height:5px;background:#9fdbdb;border:1px solid #2f7f6a"></div>

<!-- status -->
<div class="a" style="left:0;top:840px;width:1440px;height:33px;background:#58a890;border-top:1px solid #000"></div>
<div class="a" style="left:2px;top:843px;width:1435px;height:27px;background:#b4ffff;border-top:2px solid #eaffff;border-left:2px solid #eaffff;border-right:2px solid #58a090;border-bottom:2px solid #58a090"></div>
<div class="a" style="left:0;top:873px;width:1440px;height:3px;background:#d4d0c8"></div>
</body></html>
